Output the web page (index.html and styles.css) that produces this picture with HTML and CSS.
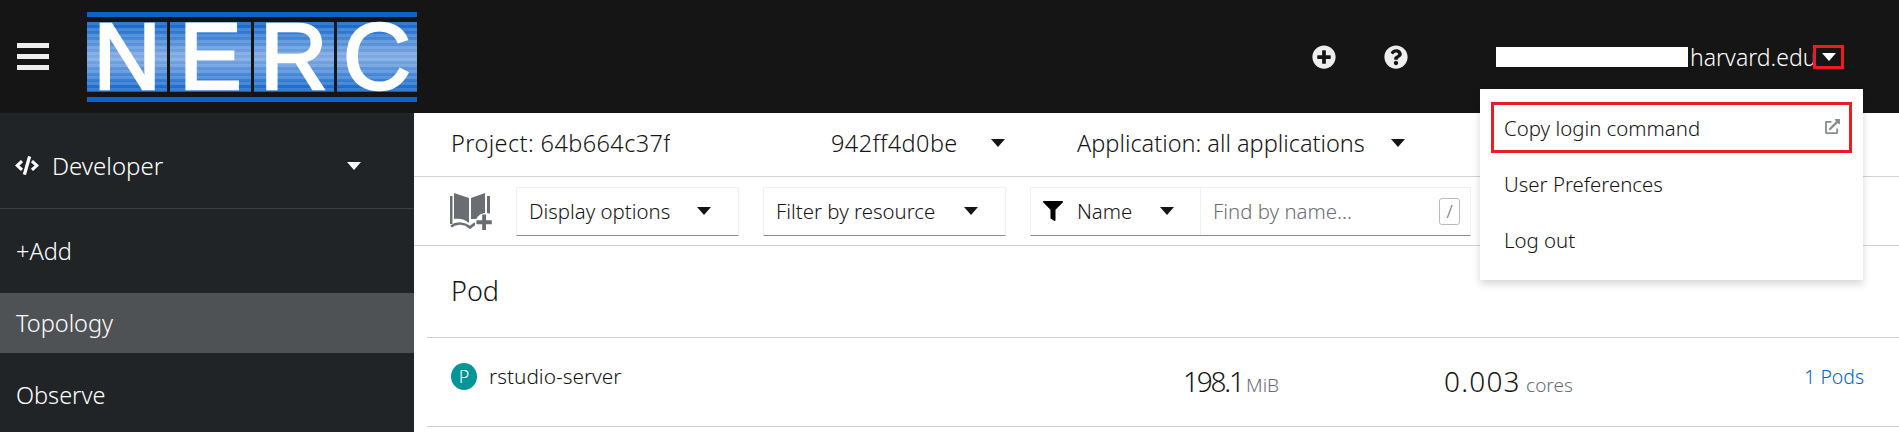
FILE: index.html
```html
<!DOCTYPE html><html lang="en">
<head>
  <meta charset="UTF-8">
  <meta name="viewport" content="width=device-width, initial-scale=1.0">
  <title>Topology</title>
  <link rel="stylesheet" href="styles.css">
</head>
<body>
  <header class="masthead">
    <div class="burger"><span></span><span></span><span></span></div>
    <div class="logo">
      <div class="logo-panel">N</div>
      <div class="logo-panel">E</div>
      <div class="logo-panel">R</div>
      <div class="logo-panel">C</div>
    </div>
    <svg class="head-icon plus-icon" viewBox="0 0 512 512"><path d="M256 8C119 8 8 119 8 256s111 248 248 248 248-111 248-248S393 8 256 8zm144 276c0 6.6-5.4 12-12 12h-92v92c0 6.6-5.4 12-12 12h-56c-6.6 0-12-5.4-12-12v-92h-92c-6.6 0-12-5.4-12-12v-56c0-6.6 5.4-12 12-12h92v-92c0-6.6 5.4-12 12-12h56c6.6 0 12 5.4 12 12v92h92c6.6 0 12 5.4 12 12v56z"/></svg>
    <svg class="head-icon help-icon" viewBox="0 0 512 512"><path d="M504 256c0 136.997-111.043 248-248 248S8 392.997 8 256C8 119.083 119.043 8 256 8s248 111.083 248 248zM262.655 90c-54.497 0-89.255 22.957-116.549 63.758-3.536 5.286-2.353 12.415 2.715 16.258l34.699 26.31c5.205 3.947 12.621 3.008 16.665-2.122 17.864-22.658 30.113-35.797 57.303-35.797 20.429 0 45.698 13.148 45.698 32.958 0 14.976-12.363 22.667-32.534 33.976C247.128 238.528 216 254.941 216 296v4c0 6.627 5.373 12 12 12h56c6.627 0 12-5.373 12-12v-1.333c0-28.462 83.186-29.647 83.186-106.667 0-58.002-60.165-102-116.531-102zM256 338c-25.365 0-46 20.635-46 46 0 25.364 20.635 46 46 46s46-20.636 46-46c0-25.365-20.635-46-46-46z"/></svg>
    <div class="user">
      <span class="redact"></span>
      <span class="user-name">harvard.edu</span>
      <span class="user-caret"><i class="caret caret-white"></i></span>
    </div>
  </header>

  <div class="page">
    <nav class="sidebar">
      <div class="perspective">
        <svg class="code-icon" viewBox="0 0 640 512"><path d="M278.9 511.5l-61-17.7c-6.4-1.8-10-8.5-8.2-14.9L346.2 8.7c1.8-6.4 8.5-10 14.9-8.2l61 17.7c6.4 1.8 10 8.5 8.2 14.9L293.8 503.3c-1.9 6.4-8.5 10.1-14.9 8.2zm-114-112.2l43.5-46.4c4.6-4.9 4.3-12.7-.8-17.2L117 256l90.6-79.7c5.1-4.5 5.5-12.3.8-17.2l-43.5-46.4c-4.5-4.8-12.1-5.1-17-.5L3.8 247.2c-5.1 4.7-5.1 12.8 0 17.5l144.1 135.1c4.9 4.6 12.5 4.4 17-.5zm327.2.6l144.1-135.1c5.1-4.7 5.1-12.8 0-17.5L492.1 112.1c-4.8-4.5-12.4-4.3-17 .5L431.6 159c-4.6 4.9-4.3 12.7.8 17.2L523 256l-90.6 79.7c-5.1 4.5-5.5 12.3-.8 17.2l43.5 46.4c4.5 4.9 12.1 5.1 17 .6z"/></svg>
        <span class="perspective-name">Developer</span>
        <i class="caret caret-white"></i>
      </div>
      <a class="nav-item">+Add</a>
      <a class="nav-item nav-active">Topology</a>
      <a class="nav-item">Observe</a>
    </nav>

    <main class="content">
      <div class="project-bar">
        <span class="project-name">Project: 64b664c37f</span>
        <span class="project-rest">942ff4d0be</span>
        <i class="caret caret-dark"></i>
        <span class="app-name">Application: all applications</span>
        <i class="caret caret-dark"></i>
      </div>

      <div class="toolbar">
        <svg class="book-icon" viewBox="0 0 42 37">
          <path d="M0 3H2.500V31H0ZM4 0L19 5V30C15 26 9 25 4 26ZM21 5L35 0V26H21ZM37 3H40V26H37Z"/>
          <path class="book-line" d="M1 33.500C7 29 15 30 20 34.500C22 32.500 24 31 27 30"/>
          <circle class="book-cut" cx="36" cy="31" r="11"/>
          <path d="M33 23H37V29H43V33H37V39H33V33H27V29H33Z" transform="translate(0.500 -0.500) scale(0.96)"/>
        </svg>
        <div class="select select-display"><span>Display options</span><i class="caret caret-dark"></i></div>
        <div class="select select-filter"><span>Filter by resource</span><i class="caret caret-dark"></i></div>
        <div class="search">
          <div class="search-type">
            <svg class="filter-icon" viewBox="0 0 512 512"><path d="M487.976 0H24.028C2.71 0-8.047 25.866 7.058 40.971L192 225.941V432c0 7.831 3.821 15.17 10.237 19.662l80 55.98C298.02 518.69 320 507.493 320 487.98V225.941l184.947-184.97C520.021 25.896 509.338 0 487.976 0z"/></svg>
            <span>Name</span>
            <i class="caret caret-dark"></i>
          </div>
          <div class="search-input">
            <span>Find by name...</span>
            <kbd class="slash">/</kbd>
          </div>
        </div>
      </div>

      <div class="group-title">Pod</div>

      <div class="pod-row">
        <span class="pod-badge">P</span>
        <span class="pod-name">rstudio-server</span>
        <span class="metric metric-mem"><b>198.1</b> <small>MiB</small></span>
        <span class="metric metric-cpu"><b>0.003</b> <small>cores</small></span>
        <a class="pod-link">1 Pods</a>
      </div>
    </main>
  </div>

  <div class="user-menu">
    <div class="menu-item menu-copy">
      <span>Copy login command</span>
      <svg class="ext-icon" viewBox="0 0 512 512"><path d="M432,320H400a16,16,0,0,0-16,16V448H64V128H208a16,16,0,0,0,16-16V80a16,16,0,0,0-16-16H48A48,48,0,0,0,0,112V464a48,48,0,0,0,48,48H400a48,48,0,0,0,48-48V336A16,16,0,0,0,432,320ZM488,0h-128c-21.37,0-32.05,25.91-17,41l35.73,35.73L135,320.37a24,24,0,0,0,0,34L157.67,377a24,24,0,0,0,34,0L435.28,133.32,471,169c15,15,41,4.5,41-17V24A24,24,0,0,0,488,0Z"/></svg>
    </div>
    <div class="menu-item">User Preferences</div>
    <div class="menu-item">Log out</div>
  </div>
</body>
</html>
```

FILE: styles.css
```css
* {
  box-sizing: border-box;
}
html, body {
  height: 100%;
}
body {
  margin: 0;
  overflow: hidden;
  font-family: "Noto Sans", sans-serif;
  font-size: 20.4px;
  font-weight: 300;
  color: #151515;
  background: #fff;
}
.caret {
  display: block;
  flex: none;
  width: 0;
  height: 0;
  border-style: solid;
  border-width: 8px 7px 0;
  border-color: #151515 transparent transparent;
}
.caret-white {
  border-top-color: #fff;
}

/* masthead */
.masthead {
  display: flex;
  align-items: center;
  height: 113px;
  padding-left: 17px;
  background: #151515;
}
.burger {
  display: flex;
  flex-direction: column;
  gap: 6px;
  width: 32px;
  margin-right: 38px;
}
.burger span {
  height: 5px;
  background: #eee;
}
.logo {
  display: flex;
  gap: 3px;
  width: 330px;
  height: 90px;
  padding: 5px 0;
  border-top: 5px solid #0a63c9;
  border-bottom: 5px solid #0a63c9;
}
.logo-panel {
  flex: 1;
  display: flex;
  align-items: center;
  justify-content: center;
  font-family: "Liberation Sans", sans-serif;
  font-weight: normal;
  font-size: 94px;
  line-height: 1;
  color: #fff;
  -webkit-text-stroke: 2.5px #fff;
  background:
    repeating-linear-gradient(to bottom, rgba(255,255,255,0.14) 0 3px, rgba(0,0,0,0) 3px 6px),
    linear-gradient(to bottom, #0f64c8, #5f97dc 35%, #7fa9e2 50%, #5f97dc 65%, #0f64c8);
}
.head-icon {
  width: 24px;
  height: 24px;
  fill: #eee;
}
.plus-icon {
  margin-left: 895px;
}
.help-icon {
  margin-left: 48px;
}
.user {
  display: flex;
  align-items: center;
  margin-left: 88px;
}
.redact {
  width: 192px;
  height: 20px;
  margin-right: 2px;
  background: #fff;
}
.user-name {
  width: 125px;
  font-size: 23px;
  color: #fff;
  white-space: nowrap;
}
.user-caret {
  display: flex;
  align-items: center;
  justify-content: center;
  width: 31px;
  height: 24px;
  margin-left: -2px;
  border: 3px solid #ed1c24;
}

/* sidebar */
.page {
  display: flex;
  height: calc(100% - 113px);
}
.sidebar {
  flex: none;
  width: 414px;
  font-size: 23.5px;
  color: #fff;
  background: #212427;
}
.perspective {
  display: flex;
  align-items: center;
  height: 96px;
  padding-top: 10px;
  padding-left: 15px;
  border-bottom: 1px solid #3c3f42;
}
.code-icon {
  width: 24px;
  height: 19px;
  fill: #fff;
}
.perspective-name {
  width: 295px;
  margin-left: 13px;
  font-size: 24px;
}
.nav-item {
  display: flex;
  align-items: center;
  height: 84px;
  padding-left: 16px;
}
.nav-active {
  height: 60px;
  background: #4f5255;
}

/* main column */
.content {
  flex: 1;
  min-width: 0;
}
.project-bar {
  display: flex;
  align-items: center;
  height: 64px;
  padding-bottom: 3px;
  padding-left: 37px;
  font-size: 23.5px;
  border-bottom: 1px solid #d2d2d2;
}
.project-name {
  width: 219px;
  overflow: hidden;
  letter-spacing: 0.4px;
  white-space: nowrap;
}
.project-rest {
  width: 160px;
  margin-left: 161px;
  letter-spacing: 0.4px;
}
.app-name {
  width: 314px;
  margin-left: 72px;
}
.toolbar {
  display: flex;
  align-items: center;
  height: 69px;
  padding-left: 36px;
  border-bottom: 1px solid #d2d2d2;
}
.book-icon {
  width: 42px;
  height: 37px;
  overflow: visible;
  fill: #6a6e73;
}
.book-line {
  fill: none;
  stroke: #6a6e73;
  stroke-width: 2.500;
}
.book-cut {
  fill: #fff;
}
.select {
  display: flex;
  align-items: center;
  justify-content: space-between;
  height: 49px;
  padding: 0 27px 0 12px;
  border: 1px solid #f0f0f0;
  border-bottom: 1px solid #8a8d90;
}
.select-display {
  width: 223px;
  margin-left: 24px;
}
.select-filter {
  width: 243px;
  margin-left: 24px;
}
.search {
  display: flex;
  width: 441px;
  height: 49px;
  margin-left: 24px;
  border: 1px solid #f0f0f0;
  border-bottom: 1px solid #8a8d90;
}
.search-type {
  display: flex;
  align-items: center;
  width: 170px;
  padding-left: 12px;
  border-right: 1px solid #f0f0f0;
}
.filter-icon {
  width: 20px;
  height: 20px;
}
.search-type span {
  width: 83px;
  margin-left: 14px;
}
.search-input {
  flex: 1;
  display: flex;
  align-items: center;
  justify-content: space-between;
  padding: 0 10px 0 12px;
  color: #6a6e73;
}
.slash {
  width: 21px;
  height: 27px;
  border: 1px solid #b8bbbe;
  border-radius: 3px;
  font-family: inherit;
  font-size: 18px;
  line-height: 24px;
  text-align: center;
}
.group-title {
  display: flex;
  align-items: center;
  height: 91px;
  padding-bottom: 3px;
  padding-left: 37px;
  font-size: 27px;
}
.pod-row {
  display: flex;
  align-items: center;
  height: 90px;
  margin-left: 13px;
  padding: 0 35px 12px 24px;
  border-top: 1px solid #d2d2d2;
  border-bottom: 1px solid #d2d2d2;
}
.pod-badge {
  display: flex;
  align-items: center;
  justify-content: center;
  width: 26px;
  height: 27px;
  border-radius: 50%;
  color: #fff;
  font-size: 18px;
  background: #009596;
}
.pod-name {
  width: 694px;
  margin-left: 12px;
  font-size: 20.8px;
}
.metric {
  padding-top: 10px;
  white-space: nowrap;
}
.metric b {
  font-size: 28px;
  font-weight: 300;
  letter-spacing: 1.2px;
}
.metric-mem b {
  letter-spacing: -2.2px;
}
.metric small {
  font-size: 19px;
  color: #6a6e73;
}
.metric-mem {
  width: 261px;
  word-spacing: -2px;
}
.pod-link {
  margin-left: auto;
  font-size: 19.4px;
  color: #06c;
}

/* user dropdown */
.user-menu {
  position: absolute;
  top: 89px;
  left: 1480px;
  width: 383px;
  height: 191px;
  padding: 13px 11px;
  background: #fff;
  box-shadow: 0 4px 8px rgba(3,3,3,0.16);
}
.menu-item {
  display: flex;
  align-items: center;
  justify-content: space-between;
  height: 56px;
  padding: 0 13px;
}
.menu-copy {
  height: 51px;
  margin-bottom: 3px;
  padding: 0 9px 0 10px;
  border: 3px solid #ed1c24;
}
.ext-icon {
  width: 15px;
  height: 15px;
  margin-top: -3px;
  fill: #8a8d90;
}
```
